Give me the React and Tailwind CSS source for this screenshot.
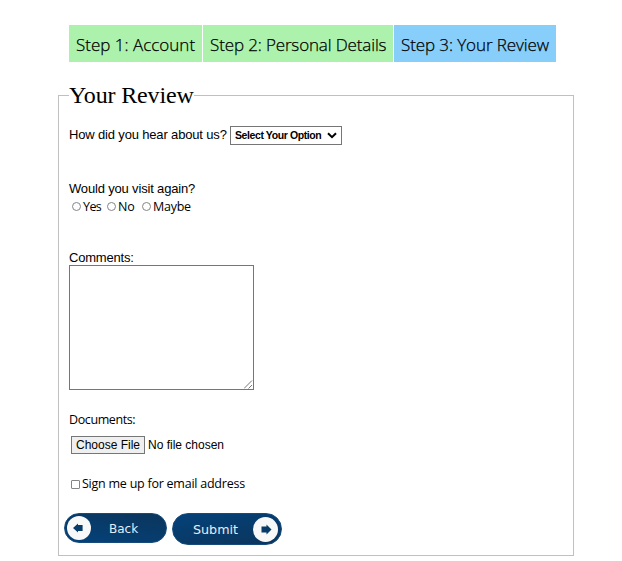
import React from "react";

const sans = "font-['Open_Sans','Noto_Sans',sans-serif]";
const arial = "font-['Liberation_Sans',Arial,sans-serif]";

function Step({ className, children }) {
  return (
    <div className={`flex h-[37px] items-center whitespace-nowrap pl-[7px] pt-[2px] text-[17px] font-light [-webkit-text-stroke:0.25px_black] ${className}`}>
      {children}
    </div>
  );
}

function Radio({ label, className }) {
  return (
    <label className={`flex items-center whitespace-nowrap ${className}`}>
      <input type="radio" name="visit" className="mr-[2px] h-[9px] w-[9px] shrink-0 appearance-none rounded-full border border-[#858585] bg-white" />
      <span className="pt-px">{label}</span>
    </label>
  );
}

export default function App() {
  return (
    <div className={`h-[561px] w-[622px] overflow-hidden bg-white pl-[58px] pt-[25px] text-black ${sans}`}>
      <nav className="ml-[11px] flex gap-px">
        <Step className="w-[133px] bg-[#acf2ac] tracking-[0px]">Step 1: Account</Step>
        <Step className="w-[190px] bg-[#acf2ac] tracking-[-0.14px]">Step 2: Personal Details</Step>
        <Step className="w-[162px] bg-[#87cefa] tracking-[-0.1px]">Step 3: Your Review</Step>
      </nav>

      <fieldset className="mt-[20px] h-[474px] w-[516px] border border-[#c0c0c0] px-[10px]">
        <legend className="h-[26px] w-[125px] whitespace-nowrap font-['Liberation_Serif',serif] text-[24px] leading-[26px] tracking-[-0.15px]">
          Your Review
        </legend>

        <div className="mt-[18px] flex h-[19px] items-center">
          <label className={`-mt-[2px] w-[161px] whitespace-nowrap text-[13px] leading-[18px] tracking-[-0.16px] ${arial}`}>How did you hear about us?</label>
          <button type="button" className={`flex h-[19px] w-[112px] items-center justify-between border border-[#767676] pl-[4px] pr-[4px] text-[10.5px] font-bold tracking-[-0.4px] ${arial}`}>
            <span className="whitespace-nowrap">Select Your Option</span>
            <svg width="10" height="7" viewBox="0 0 10 7" fill="none" stroke="#000" strokeWidth="2">
              <path d="M1 1.2 L5 5.2 L9 1.2" />
            </svg>
          </button>
        </div>

        <div className={`mt-[35px] h-[17px] whitespace-nowrap text-[13px] leading-[18px] tracking-[-0.17px] ${arial}`}>Would you visit again?</div>
        <div className="flex h-[18px] items-center pl-[3px] text-[12.5px] leading-[18px] tracking-[-0.25px]">
          <Radio label="Yes" className="w-[35px] tracking-[-0.6px]" />
          <Radio label="No" className="w-[35px]" />
          <Radio label="Maybe" className="w-[60px]" />
        </div>

        <div className={`mt-[35px] h-[15px] text-[13px] leading-[16px] tracking-[-0.2px] ${arial}`}>Comments:</div>
        <div className="flex h-[125px] w-[185px] items-end justify-end border border-[#767676]">
          <svg width="9" height="9" viewBox="0 0 9 9" stroke="#555" strokeWidth="0.8">
            <path d="M0 8.5 L8 0.5 M4.5 8.5 L8 5" />
          </svg>
        </div>

        <div className="mt-[21px] h-[17px] text-[12.5px] leading-[18px] tracking-[-0.4px]">Documents:</div>
        <div className={`ml-[2px] mt-[8px] flex h-[18px] items-center text-[12px] ${arial}`}>
          <button type="button" className="flex h-[18px] w-[74px] items-center justify-center whitespace-nowrap border border-[#767676] bg-[#efefef]">
            Choose File
          </button>
          <span className="ml-[3px] whitespace-nowrap">No file chosen</span>
        </div>

        <label className="ml-[2px] mt-[20px] flex h-[20px] items-center whitespace-nowrap text-[12.5px] tracking-[-0.24px]">
          <input type="checkbox" className="mr-[2px] h-[9px] w-[9px] shrink-0 appearance-none rounded-[1px] border border-[#858585] bg-white" />
          Sign me up for email address
        </label>

        <div className="-ml-[5px] mt-[19px] flex items-start gap-[5px] font-['DejaVu_Sans',sans-serif] text-[#e6edf5]">
          <button type="button" className="flex h-[30px] w-[103px] items-center rounded-full border border-[#164b7b] bg-[linear-gradient(10deg,#04427a,#0b355c)] pl-[2px]">
            <svg width="24" height="24" viewBox="0 0 24 24">
              <circle cx="12" cy="12" r="12" fill="#f8f8f8" />
              <path d="M6 12 L11 7.5 V9 H15.6 V15 H11 V16.5 Z" fill="#063b6a" />
            </svg>
            <span className="ml-[18px] pt-px text-[12px]">Back</span>
          </button>
          <button type="button" className="flex h-[32px] w-[110px] items-center rounded-full border border-[#164b7b] bg-[linear-gradient(170deg,#04427a,#0b355c)] pl-[20px]">
            <span className="w-[60px] pt-px text-left text-[12.7px]">Submit</span>
            <svg width="25" height="25" viewBox="0 0 25 25">
              <circle cx="12.5" cy="12.5" r="12.5" fill="#f8f8f8" />
              <path d="M18.5 12.5 L13.5 7.5 V9.5 H8.5 V15.5 H13.5 V17.5 Z" fill="#063b6a" />
            </svg>
          </button>
        </div>
      </fieldset>
    </div>
  );
}
